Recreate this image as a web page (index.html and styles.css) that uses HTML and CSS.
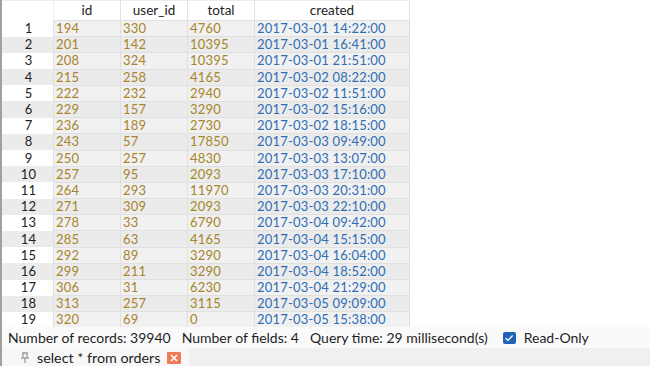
FILE: index.html
```html
<!DOCTYPE html>
<html lang="en">
<head>
    <meta charset="UTF-8">
    <title>orders</title>
    <link rel="stylesheet" href="styles.css">
</head>
<body>
    <div class="window">
        <div class="grid-area">
            <table class="result-grid">
                <thead>
                    <tr>
                        <th class="rownum"></th>
                        <th class="c-id">id</th>
                        <th class="c-user">user_id</th>
                        <th class="c-total">total</th>
                        <th class="c-created">created</th>
                    </tr>
                </thead>
                <tbody>
                    <tr><td class="rownum">1</td><td class="num">194</td><td class="num">330</td><td class="num">4760</td><td class="date">2017-03-01 14:22:00</td></tr>
                    <tr><td class="rownum">2</td><td class="num">201</td><td class="num">142</td><td class="num">10395</td><td class="date">2017-03-01 16:41:00</td></tr>
                    <tr><td class="rownum">3</td><td class="num">208</td><td class="num">324</td><td class="num">10395</td><td class="date">2017-03-01 21:51:00</td></tr>
                    <tr><td class="rownum">4</td><td class="num">215</td><td class="num">258</td><td class="num">4165</td><td class="date">2017-03-02 08:22:00</td></tr>
                    <tr><td class="rownum">5</td><td class="num">222</td><td class="num">232</td><td class="num">2940</td><td class="date">2017-03-02 11:51:00</td></tr>
                    <tr><td class="rownum">6</td><td class="num">229</td><td class="num">157</td><td class="num">3290</td><td class="date">2017-03-02 15:16:00</td></tr>
                    <tr><td class="rownum">7</td><td class="num">236</td><td class="num">189</td><td class="num">2730</td><td class="date">2017-03-02 18:15:00</td></tr>
                    <tr><td class="rownum">8</td><td class="num">243</td><td class="num">57</td><td class="num">17850</td><td class="date">2017-03-03 09:49:00</td></tr>
                    <tr><td class="rownum">9</td><td class="num">250</td><td class="num">257</td><td class="num">4830</td><td class="date">2017-03-03 13:07:00</td></tr>
                    <tr><td class="rownum">10</td><td class="num">257</td><td class="num">95</td><td class="num">2093</td><td class="date">2017-03-03 17:10:00</td></tr>
                    <tr><td class="rownum">11</td><td class="num">264</td><td class="num">293</td><td class="num">11970</td><td class="date">2017-03-03 20:31:00</td></tr>
                    <tr><td class="rownum">12</td><td class="num">271</td><td class="num">309</td><td class="num">2093</td><td class="date">2017-03-03 22:10:00</td></tr>
                    <tr><td class="rownum">13</td><td class="num">278</td><td class="num">33</td><td class="num">6790</td><td class="date">2017-03-04 09:42:00</td></tr>
                    <tr><td class="rownum">14</td><td class="num">285</td><td class="num">63</td><td class="num">4165</td><td class="date">2017-03-04 15:15:00</td></tr>
                    <tr><td class="rownum">15</td><td class="num">292</td><td class="num">89</td><td class="num">3290</td><td class="date">2017-03-04 16:04:00</td></tr>
                    <tr><td class="rownum">16</td><td class="num">299</td><td class="num">211</td><td class="num">3290</td><td class="date">2017-03-04 18:52:00</td></tr>
                    <tr><td class="rownum">17</td><td class="num">306</td><td class="num">31</td><td class="num">6230</td><td class="date">2017-03-04 21:29:00</td></tr>
                    <tr><td class="rownum">18</td><td class="num">313</td><td class="num">257</td><td class="num">3115</td><td class="date">2017-03-05 09:09:00</td></tr>
                    <tr><td class="rownum">19</td><td class="num">320</td><td class="num">69</td><td class="num">0</td><td class="date">2017-03-05 15:38:00</td></tr>
                </tbody>
            </table>
        </div>

        <div class="status-bar">
            <span>Number of records: 39940</span>
            <span>Number of fields: 4</span>
            <span>Query time: 29 millisecond(s)</span>
            <label class="readonly">
                <span class="check">
                    <svg width="10" height="8" viewBox="0 0 10 8"><path d="M1.5 4.2 L4 6.4 L8.6 1.6" fill="none" stroke="#fff" stroke-width="1.4"/></svg>
                </span>
                Read-Only
            </label>
        </div>

        <div class="tab-bar">
            <div class="tab">
                <svg class="pin" width="10" height="12" viewBox="0 0 10 12">
                    <path d="M2 1 H8 M3 1 V5 M7 1 V5 M1 6 H9 M5 6 V11" fill="none" stroke="#9a9a9a" stroke-width="1.3"/>
                </svg>
                <span class="tab-title">select * from orders</span>
                <span class="tab-close">
                    <svg width="8" height="8" viewBox="0 0 8 8"><path d="M1 1 L7 7 M7 1 L1 7" stroke="#fff" stroke-width="1.6"/></svg>
                </span>
            </div>
        </div>
    </div>
</body>
</html>
```

FILE: styles.css
```css
body {
    margin: 0;
    font-family: Lato, "Noto Sans", sans-serif;
    font-size: 13px;
    color: #222;
    background-color: #fff;
}
.window {
    width: 650px;
    height: 366px;
    display: flex;
    flex-direction: column;
    border-left: 2px solid #a0a0a0;
    box-sizing: border-box;
    overflow: hidden;
}
.grid-area {
    height: 327px;
    flex-shrink: 0;
    background-color: #fff;
}
.result-grid {
    border-collapse: collapse;
    table-layout: fixed;
    width: 408px;
}
.result-grid th {
    height: 19px;
    padding: 0;
    line-height: 17px;
    font-size: 13.5px;
    font-weight: normal;
    color: #222;
    text-align: center;
    background-color: #fff;
    border-right: 1px solid #e2e2e2;
    border-top: 1px solid #ececec;
}
.result-grid th.rownum {
    width: 51px;
    border-right: 1px solid #f0f0f0;
}
.c-id,
.c-user,
.c-total {
    width: 66px;
}
.result-grid td {
    height: 15.2px;
    padding: 0 0 0 2px;
    line-height: 15px;
    border: 1px solid #e0e0e0;
    background-color: #f1f1f1;
    white-space: nowrap;
    overflow: hidden;
    letter-spacing: 0.2px;
}
.result-grid tr:nth-child(even) td {
    background-color: #ebebeb;
}
.result-grid td.rownum {
    background-color: #fff;
    border: none;
    text-align: center;
    padding: 0 0 0 2px;
    color: #222;
}
.num {
    color: #a8842a;
}
.date {
    color: #2e6db4;
}
.status-bar {
    height: 21px;
    flex-shrink: 0;
    display: flex;
    align-items: center;
    gap: 11px;
    padding-left: 6px;
    background-color: #fafafa;
    color: #1e1e1e;
    font-size: 14px;
}
.readonly {
    display: flex;
    align-items: center;
    gap: 8px;
    margin-left: 4px;
}
.check {
    width: 13px;
    height: 12px;
    border-radius: 2px;
    background-color: #1f64b7;
    display: flex;
    align-items: center;
    justify-content: center;
}
.tab-bar {
    flex: 1;
    background-color: #f0f0f0;
    display: flex;
}
.tab {
    display: flex;
    align-items: center;
    gap: 7px;
    padding: 1px 8px 0 18px;
    background-color: #f7f7f7;
    font-size: 14.3px;
}
.tab-title {
    color: #1e1e1e;
}
.tab-close {
    width: 14px;
    height: 12px;
    border-radius: 1px;
    background-color: #f07a55;
    display: flex;
    align-items: center;
    justify-content: center;
}
```
